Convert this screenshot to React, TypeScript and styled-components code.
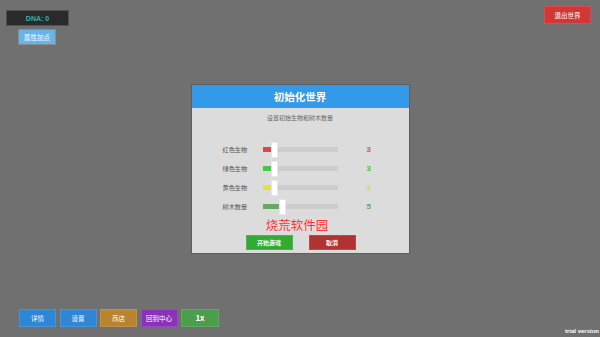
import React from "react";
import styled, { createGlobalStyle } from "styled-components";

const GlobalStyle = createGlobalStyle`
  html, body {
    margin: 0;
    padding: 0;
    background: #707070;
  }
  body {
    font-family: "Noto Sans CJK SC", "Liberation Sans", sans-serif;
  }
`;

const Page = styled.div`
  position: relative;
  display: flex;
  flex-direction: column;
  justify-content: space-between;
  width: 600px;
  height: 337px;
  overflow: hidden;
  background: #707070;
`;

const TopBar = styled.div`
  display: flex;
  justify-content: space-between;
  align-items: flex-start;
  padding: 6px 9px 0 6px;
`;

const LeftColumn = styled.div`
  display: flex;
  flex-direction: column;
  align-items: flex-start;
  gap: 3px;
  margin-top: 4px;
`;

const DnaBox = styled.div`
  display: flex;
  align-items: center;
  justify-content: center;
  width: 63px;
  height: 16px;
  box-sizing: border-box;
  background: #2a2a2a;
  border: 1px solid #525252;
  color: #2fb3b3;
  font-family: "Liberation Sans", sans-serif;
  font-size: 7px;
  font-weight: bold;
`;

const GameButton = styled.button<{ $bg: string; $w?: number; $h?: number; $size?: number; $bold?: boolean }>`
  display: flex;
  align-items: center;
  justify-content: center;
  width: ${({ $w }) => $w ?? 37}px;
  height: ${({ $h }) => $h ?? 17}px;
  padding: 0;
  box-sizing: border-box;
  background: ${({ $bg }) => $bg};
  border: 1px solid rgba(255, 255, 255, 0.12);
  color: #fff;
  font-family: "Noto Sans CJK SC", "Liberation Sans", sans-serif;
  font-size: ${({ $size }) => $size ?? 6.5}px;
  font-weight: ${({ $bold }) => ($bold ? "bold" : "normal")};
  line-height: 1;
  cursor: pointer;
`;

const AttrButton = styled(GameButton)`
  margin-left: 12px;
  border-color: #8a8a8a;
`;

const BottomBar = styled.div`
  display: flex;
  gap: 3.5px;
  padding: 0 0 10px 19px;
`;

const Overlay = styled.div`
  position: absolute;
  inset: 0;
  display: flex;
  align-items: center;
  justify-content: center;
  pointer-events: none;
`;

const Dialog = styled.div`
  display: flex;
  flex-direction: column;
  width: 219px;
  height: 170px;
  box-sizing: border-box;
  background: #dcdcdc;
  border: 1px solid #5e5e5e;
  pointer-events: auto;
  margin-top: 1px;
`;

const DialogHeader = styled.div`
  display: flex;
  align-items: center;
  justify-content: center;
  height: 23px;
  background: #339aea;
  color: #fff;
  font-size: 10.5px;
  font-weight: bold;
`;

const DialogBody = styled.div`
  display: flex;
  flex-direction: column;
  align-items: center;
  padding-top: 5px;
`;

const Subtitle = styled.div`
  height: 10px;
  line-height: 10px;
  font-size: 6px;
  color: #666;
`;

const Rows = styled.div`
  display: flex;
  flex-direction: column;
  align-self: stretch;
  margin-top: 17px;
  padding-left: 31px;
`;

const Row = styled.div`
  display: flex;
  align-items: center;
  height: 19px;
`;

const Label = styled.div`
  width: 40px;
  font-size: 6.2px;
  color: #555;
`;

const Track = styled.div`
  position: relative;
  width: 75px;
  height: 5px;
  background: #cdcdcd;
`;

const Fill = styled.div<{ $color: string }>`
  height: 100%;
  background: ${({ $color }) => $color};
`;

const Thumb = styled.div`
  position: absolute;
  top: 50%;
  width: 7px;
  height: 16px;
  box-sizing: border-box;
  transform: translateY(-50%);
  background: #fff;
  border: 1px solid #e8e8e8;
`;

const Value = styled.div<{ $color: string }>`
  margin-left: 29px;
  font-family: "Liberation Sans", sans-serif;
  font-size: 8px;
  font-weight: bold;
  color: ${({ $color }) => $color};
`;

const Watermark = styled.div`
  height: 15px;
  line-height: 15px;
  margin-top: 1px;
  margin-right: 6px;
  font-size: 12.5px;
  color: #ff3434;
`;

const DialogActions = styled.div`
  display: flex;
  gap: 16px;
  margin-top: 3px;
  margin-left: 1px;
`;

const TrialText = styled.div`
  position: absolute;
  right: 1px;
  bottom: 3px;
  color: #fff;
  font-family: "Liberation Sans", sans-serif;
  font-size: 6px;
  font-weight: bold;
`;

type SliderRow = { label: string; value: number; fill: string; text: string };

const rows: SliderRow[] = [
  { label: "红色生物", value: 3, fill: "#e04646", text: "#ee4f4f" },
  { label: "绿色生物", value: 3, fill: "#44c944", text: "#49c449" },
  { label: "黄色生物", value: 3, fill: "#e6e03a", text: "#e0d83a" },
  { label: "树木数量", value: 5, fill: "#66a866", text: "#62a862" },
];

const MIN = 1;
const MAX = 18;
const USABLE = 68;

const App: React.FC = () => {
  return (
    <Page>
      <GlobalStyle />
      <TopBar>
        <LeftColumn>
          <DnaBox>DNA: 0</DnaBox>
          <AttrButton $bg="#66b4e8" $w={38} $h={16}>
            属性加点
          </AttrButton>
        </LeftColumn>
        <GameButton $bg="#d23636" $w={47} $h={18}>
          退出世界
        </GameButton>
      </TopBar>

      <BottomBar>
        <GameButton $bg="#2f86d4" $h={18}>详情</GameButton>
        <GameButton $bg="#2f86d4" $h={18}>设置</GameButton>
        <GameButton $bg="#b8842f" $h={18}>商店</GameButton>
        <GameButton $bg="#8a32b8" $h={18}>回到中心</GameButton>
        <GameButton $bg="#4c9e4c" $w={38} $h={18} $size={8} $bold>
          1x
        </GameButton>
      </BottomBar>

      <Overlay>
        <Dialog>
          <DialogHeader>初始化世界</DialogHeader>
          <DialogBody>
            <Subtitle>设置初始生物和树木数量</Subtitle>
            <Rows>
              {rows.map(r => {
                const px = Math.round(((r.value - MIN) / (MAX - MIN)) * USABLE);
                return (
                  <Row key={r.label}>
                    <Label>{r.label}</Label>
                    <Track>
                      <Fill $color={r.fill} style={{ width: px }} />
                      <Thumb style={{ left: px }} />
                    </Track>
                    <Value $color={r.text}>{r.value}</Value>
                  </Row>
                );
              })}
            </Rows>
            <Watermark>烧荒软件园</Watermark>
            <DialogActions>
              <GameButton $bg="#33ab33" $w={47} $h={15} $size={6} $bold>
                开始游戏
              </GameButton>
              <GameButton $bg="#b03232" $w={47} $h={15} $size={6} $bold>
                取消
              </GameButton>
            </DialogActions>
          </DialogBody>
        </Dialog>
      </Overlay>

      <TrialText>trial version</TrialText>
    </Page>
  );
};

export default App;
